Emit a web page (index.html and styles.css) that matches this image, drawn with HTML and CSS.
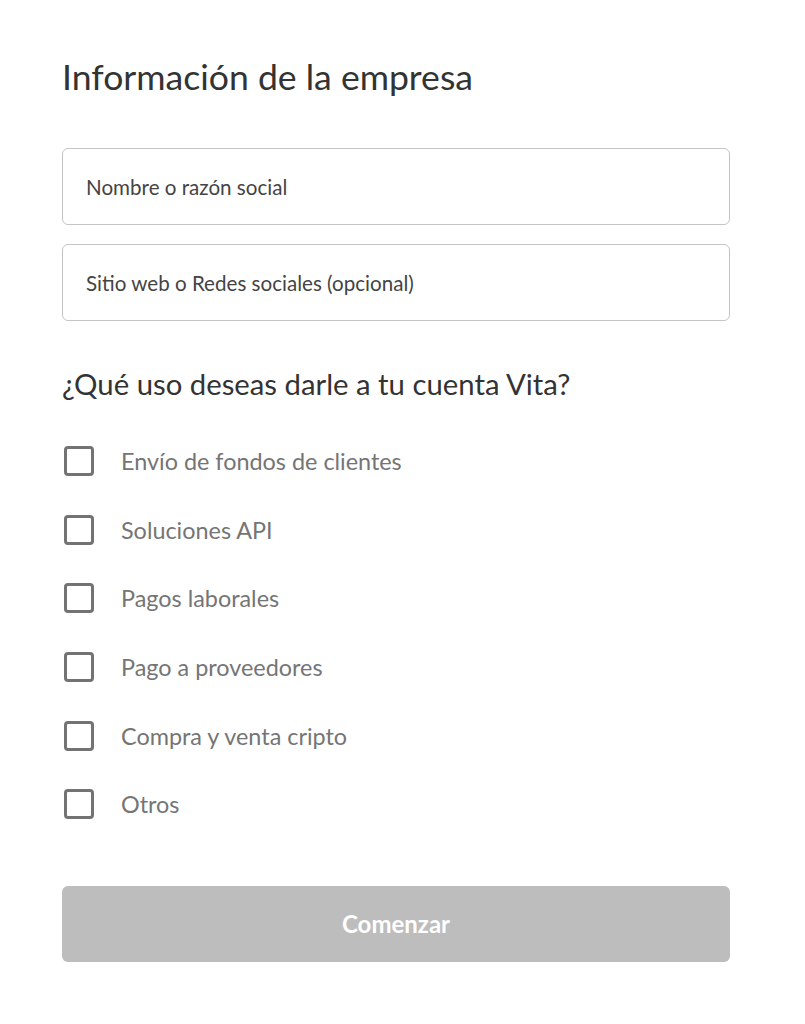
FILE: index.html
```html
<!DOCTYPE html>
<html lang="es">
<head>
    <meta charset="UTF-8">
    <meta name="viewport" content="width=device-width, initial-scale=1.0">
    <title>Información de la empresa</title>
    <link rel="stylesheet" href="styles.css">
</head>
<body>
    <div class="container">
        <h1 class="title">Información de la empresa</h1>
        <div class="field">
            <input type="text" placeholder="Nombre o razón social">
        </div>
        <div class="field">
            <input type="text" placeholder="Sitio web o Redes sociales (opcional)">
        </div>
        <h2 class="question">¿Qué uso deseas darle a tu cuenta Vita?</h2>
        <div class="options">
            <label class="option"><span class="box"></span>Envío de fondos de clientes</label>
            <label class="option"><span class="box"></span>Soluciones API</label>
            <label class="option"><span class="box"></span>Pagos laborales</label>
            <label class="option"><span class="box"></span>Pago a proveedores</label>
            <label class="option"><span class="box"></span>Compra y venta cripto</label>
            <label class="option"><span class="box"></span>Otros</label>
        </div>
        <button class="start" disabled>Comenzar</button>
    </div>
</body>
</html>
```

FILE: styles.css
```css
body { margin: 0; font-family: Lato, "Open Sans", sans-serif; background: #fff; }
.container { width: 668px; margin-left: 62px; padding-top: 55px; }
.title { margin: 0 0 49px; font-size: 35.6px; font-weight: 400; color: #333; line-height: 44px; }
.field { margin-bottom: 19px; }
.field input { box-sizing: border-box; width: 100%; height: 77px; padding: 0 23px; border: 1px solid #c4c4c4; border-radius: 6px; font-family: inherit; font-size: 20.6px; color: #333; outline: none; }
.field input::placeholder { color: #444; }
.question { margin: 45px 0 25px; font-size: 29.3px; font-weight: 400; color: #333; line-height: 36px; }
.options { display: flex; flex-direction: column; }
.option { display: flex; align-items: center; height: 68.6px; font-size: 23.4px; color: #757575; cursor: pointer; }
.box { box-sizing: border-box; width: 30px; height: 30px; margin: 0 27px 0 2px; border: 3px solid #737373; border-radius: 4px; }
.start { display: block; width: 100%; height: 76px; margin-top: 47px; border: none; border-radius: 6px; background: #bdbdbd; color: #fff; font-family: inherit; font-size: 24px; font-weight: 700; }
```
